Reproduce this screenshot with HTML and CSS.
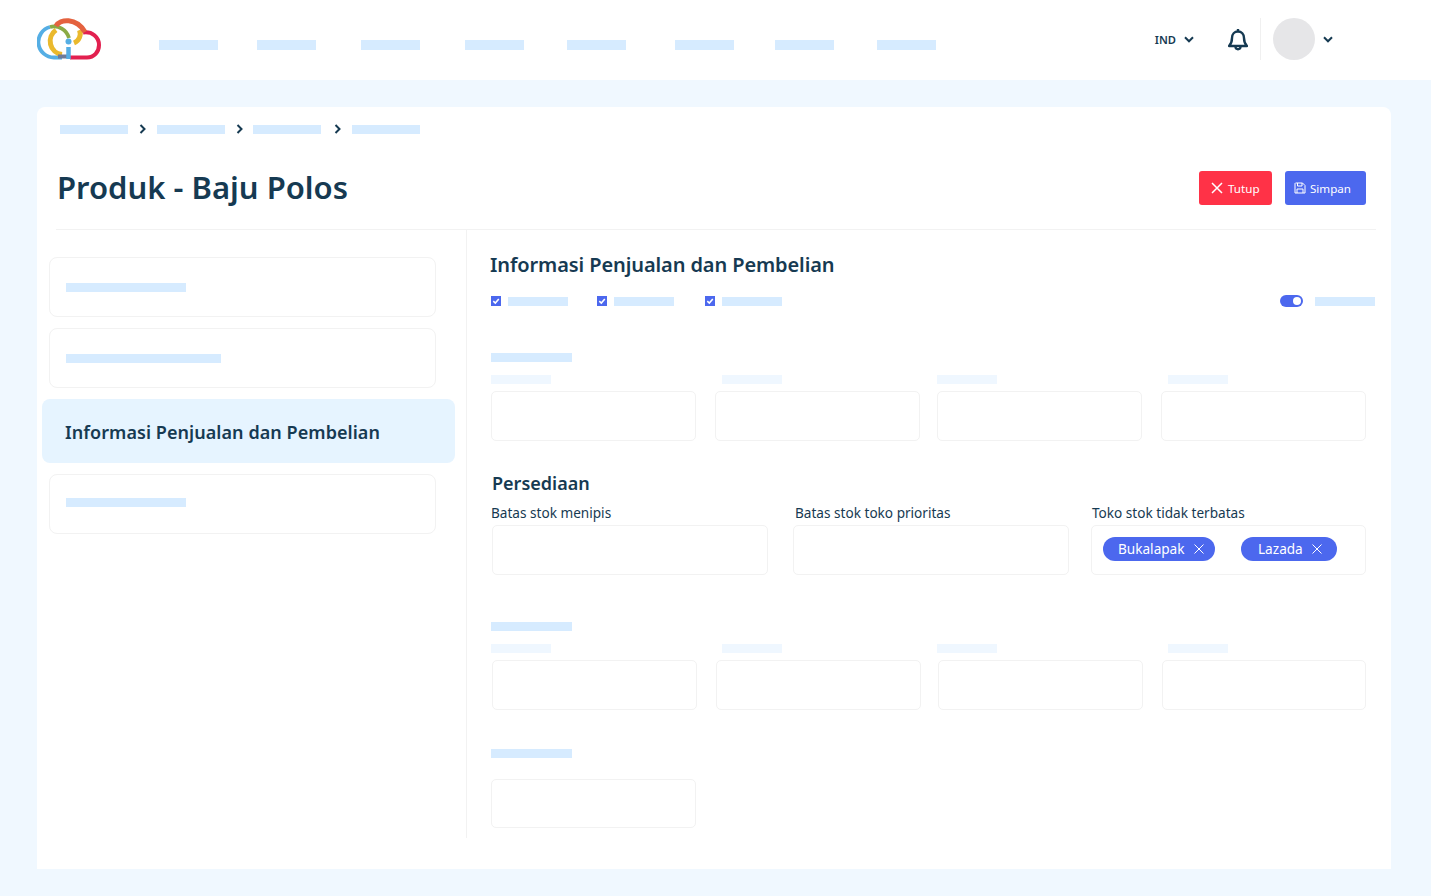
FILE: index.html
```html
<!DOCTYPE html>
<html lang="en">
<head>
    <meta charset="UTF-8">
    <title>Produk - Baju Polos</title>
    <link rel="stylesheet" href="styles.css">
</head>
<body>
    <header class="topbar">
        <svg class="logo" viewBox="37 18 65 42" width="65" height="42" fill="none">
            <path d="M83 32.500 C92 31 99 37 99 45 C99 52 94 57.500 87 57.500 H70" stroke="#e2204f" stroke-width="4"/>
            <path d="M62 57.500 H54 A15.500 15.500 0 0 1 50 27" stroke="#55aee4" stroke-width="3.800"/>
            <path d="M62 54.500 A13.500 13.500 0 0 1 56 30" stroke="#eab92d" stroke-width="5"/>
            <path d="M74 43 A10 10 0 0 0 79.500 30" stroke="#eab92d" stroke-width="5"/>
            <path d="M50 27 A15.500 15.500 0 0 1 69 38" stroke="#8aaa45" stroke-width="3.800"/>
            <path d="M56 26 C60 19 76 17 85 32" stroke="#e4623f" stroke-width="5"/>
            <path d="M58 56.500 H70" stroke="#6f7a98" stroke-width="4"/>
            <circle cx="68.500" cy="41.500" r="3" fill="#55aee4"/>
            <path d="M68.500 47 V59" stroke="#55aee4" stroke-width="4.500"/>
        </svg>
        <nav class="nav">
            <span class="bar"></span><span class="bar"></span><span class="bar"></span><span class="bar"></span>
            <span class="bar"></span><span class="bar"></span><span class="bar"></span><span class="bar"></span>
        </nav>
        <div class="top-right">
            <span class="lang">IND</span>
            <svg class="chev" viewBox="0 0 10 7" width="10" height="7"><path d="M1 1.300 L5 5.300 L9 1.300"/></svg>
            <svg class="bell" viewBox="0 0 20 23" width="20" height="23" fill="none" stroke="#163a52" stroke-width="2.400">
                <path d="M1 18 H19 C16.500 15.500 16 14 16 10 C16 6 13.500 3.500 10 3.500 C6.500 3.500 4 6 4 10 C4 14 3.500 15.500 1 18 Z" stroke-linejoin="round"/>
                <path d="M10 1 V3.500"/>
                <path d="M7.500 19 C7.800 22 12.200 22 12.500 19"/>
            </svg>
            <span class="vline"></span>
            <span class="avatar"></span>
            <svg class="chev" viewBox="0 0 10 7" width="10" height="7"><path d="M1 1.300 L5 5.300 L9 1.300"/></svg>
        </div>
    </header>

    <main class="card">
        <div class="crumbs">
            <span class="bar"></span>
            <svg class="crumb-arrow" viewBox="0 0 7 10" width="7" height="10"><path d="M1.500 1 L5.500 5 L1.500 9"/></svg>
            <span class="bar"></span>
            <svg class="crumb-arrow tight" viewBox="0 0 7 10" width="7" height="10"><path d="M1.500 1 L5.500 5 L1.500 9"/></svg>
            <span class="bar"></span>
            <svg class="crumb-arrow wide" viewBox="0 0 7 10" width="7" height="10"><path d="M1.500 1 L5.500 5 L1.500 9"/></svg>
            <span class="bar"></span>
        </div>

        <div class="title-row">
            <h1>Produk - Baju Polos</h1>
            <button class="btn btn-red">
                <svg viewBox="0 0 12 12" width="12" height="12"><path d="M1 1 L11 11 M11 1 L1 11"/></svg>
                Tutup
            </button>
            <button class="btn btn-blue">
                <svg viewBox="0 0 12 12" width="12" height="12"><path d="M1.500 1 H8.500 L11 3.500 V11 H1 V1.500 Z M3.500 1 V4 H8 V1 M3 11 V7 H9 V11"/></svg>
                Simpan
            </button>
        </div>

        <div class="body">
            <aside class="sidebar">
                <div class="side-item"><span class="bar w120"></span></div>
                <div class="side-item"><span class="bar w155"></span></div>
                <div class="side-item active"><span>Informasi Penjualan dan Pembelian</span></div>
                <div class="side-item"><span class="bar w120 raised"></span></div>
            </aside>

            <section class="content">
                <h2>Informasi Penjualan dan Pembelian</h2>

                <div class="checks">
                    <span class="check"><svg viewBox="0 0 10 10" width="10" height="10"><path d="M2.300 5.200 L4.300 7 L7.800 3"/></svg></span>
                    <span class="bar"></span>
                    <span class="check second"><svg viewBox="0 0 10 10" width="10" height="10"><path d="M2.300 5.200 L4.300 7 L7.800 3"/></svg></span>
                    <span class="bar"></span>
                    <span class="check third"><svg viewBox="0 0 10 10" width="10" height="10"><path d="M2.300 5.200 L4.300 7 L7.800 3"/></svg></span>
                    <span class="bar"></span>
                    <span class="toggle"><span class="knob"></span></span>
                    <span class="bar"></span>
                </div>

                <span class="bar heading first"></span>
                <div class="fields">
                    <div><span class="bar pale"></span><div class="input"></div></div>
                    <div><span class="bar pale indent"></span><div class="input"></div></div>
                    <div><span class="bar pale"></span><div class="input"></div></div>
                    <div><span class="bar pale indent"></span><div class="input"></div></div>
                </div>

                <h3>Persediaan</h3>
                <div class="stock">
                    <div>
                        <label>Batas stok menipis</label>
                        <div class="input"></div>
                    </div>
                    <div>
                        <label class="nudge">Batas stok toko prioritas</label>
                        <div class="input"></div>
                    </div>
                    <div>
                        <label class="nudge-small">Toko stok tidak terbatas</label>
                        <div class="input tags">
                            <span class="tag tag-wide"><span class="tag-text">Bukalapak</span> <svg viewBox="0 0 10 10" width="10" height="10"><path d="M0.500 0.500 L9.500 9.500 M9.500 0.500 L0.500 9.500"/></svg></span>
                            <span class="tag tag-narrow"><span class="tag-text">Lazada</span> <svg viewBox="0 0 10 10" width="10" height="10"><path d="M0.500 0.500 L9.500 9.500 M9.500 0.500 L0.500 9.500"/></svg></span>
                        </div>
                    </div>
                </div>

                <span class="bar heading third-block"></span>
                <div class="fields shifted">
                    <div><span class="bar pale"></span><div class="input"></div></div>
                    <div><span class="bar pale indent"></span><div class="input"></div></div>
                    <div><span class="bar pale"></span><div class="input"></div></div>
                    <div><span class="bar pale indent"></span><div class="input"></div></div>
                </div>

                <span class="bar heading last-block"></span>
                <div class="input lone"></div>
            </section>
        </div>
    </main>
</body>
</html>
```

FILE: styles.css
```css
* {
    margin: 0;
    padding: 0;
    box-sizing: border-box;
}

body {
    font-family: "Noto Sans", Lato, sans-serif;
    background: #f0f8ff;
    color: #163a52;
    height: 896px;
    overflow: hidden;
}

.bar {
    display: block;
    width: 60px;
    height: 9px;
    background: #d6ebff;
}

/* top bar */
.topbar {
    display: flex;
    align-items: center;
    height: 80px;
    padding: 0 98px 2px 37px;
    background: #fff;
}

.logo {
    flex: none;
}

.nav {
    display: grid;
    grid-template-columns: 98px 104px 104px 102px 108px 100px 102px 59px;
    margin-left: 57px;
    margin-top: 12px;
}

.nav .bar {
    width: 59px;
    height: 10px;
}

.top-right {
    display: flex;
    align-items: center;
    margin-left: auto;
}

.lang {
    font-size: 11.200px;
    font-weight: 600;
    margin-right: 8px;
}

.chev {
    fill: none;
    stroke: #163a52;
    stroke-width: 2;
}

.bell {
    margin-left: 34px;
}

.vline {
    width: 1px;
    height: 42px;
    margin: 0 12px;
    background: #f0f0f0;
}

.avatar {
    width: 42px;
    height: 42px;
    margin-right: 8px;
    border-radius: 50%;
    background: #e6e6e8;
}

/* main card */
.card {
    width: 1354px;
    height: 762px;
    margin: 27px 0 0 37px;
    background: #fff;
    border-radius: 8px 8px 0 0;
}

.crumbs {
    display: flex;
    align-items: center;
    padding: 17px 0 0 23px;
}

.crumbs .bar {
    width: 68px;
}

.crumb-arrow {
    margin: 0 11px;
    fill: none;
    stroke: #163a52;
    stroke-width: 2;
}

.crumb-arrow.tight {
    margin-right: 10px;
}

.crumb-arrow.wide {
    margin-left: 13px;
}

.title-row {
    display: flex;
    align-items: center;
    margin: 37px 15px 0 19px;
    padding: 0 10px 24px 1px;
    border-bottom: 1px solid #f2f2f2;
}

h1 {
    margin-right: auto;
    padding-bottom: 2px;
    font-size: 31px;
    line-height: 32px;
    font-weight: 600;
}

.btn {
    display: flex;
    align-items: center;
    gap: 5px;
    height: 34px;
    border: 0;
    border-radius: 3px;
    color: #fff;
    font-family: inherit;
    font-size: 11.600px;
}

.btn svg {
    fill: none;
    stroke: #fff;
}

.btn-red {
    width: 73px;
    padding-left: 12px;
    background: #ff3247;
}

.btn-red svg {
    stroke-width: 1.500;
}

.btn-blue {
    width: 81px;
    margin-left: 13px;
    padding-left: 9px;
    gap: 4px;
    background: #4c68ee;
}

.body {
    display: flex;
    height: 608px;
}

.sidebar {
    width: 430px;
    padding-top: 27px;
    border-right: 1px solid #f2f2f2;
}

.side-item {
    display: flex;
    align-items: center;
    width: 387px;
    height: 60px;
    margin: 0 0 11px 12px;
    padding-left: 16px;
    border: 1px solid #f2f2f2;
    border-radius: 8px;
}

.side-item.active {
    width: 413px;
    height: 64px;
    margin-left: 5px;
    padding: 2px 0 0 23px;
    border: 0;
    background: #e6f4ff;
    font-size: 18px;
    font-weight: 600;
    letter-spacing: 0.060px;
}

.w120 {
    width: 120px;
}

.w155 {
    width: 155px;
}

.raised {
    margin-bottom: 3px;
}

/* right side */
.content {
    flex: 1;
    padding: 20px 0 0 24px;
}

h2 {
    margin-left: -1px;
    font-size: 20px;
    line-height: 30px;
    font-weight: 600;
    letter-spacing: -0.100px;
}

.checks {
    display: flex;
    align-items: center;
    height: 12px;
    margin-top: 15px;
}

.check {
    display: block;
    width: 10px;
    height: 10px;
    margin-right: 7px;
    background: #4c68ee;
}

.check svg {
    display: block;
    fill: none;
    stroke: #fff;
    stroke-width: 1.600;
}

.check.second {
    margin-left: 29px;
}

.check.third {
    margin-left: 31px;
}

.toggle {
    display: block;
    width: 23px;
    height: 12px;
    margin: 0 12px 0 auto;
    padding: 2px;
    border-radius: 6px;
    background: #4c68ee;
}

.knob {
    display: block;
    width: 8px;
    height: 8px;
    margin-left: 11px;
    border-radius: 50%;
    background: #fff;
}

.checks .bar:last-child {
    margin-right: 16px;
}

.heading {
    width: 81px;
}

.heading.first {
    margin-top: 46px;
}

.heading.third-block {
    margin-top: 47px;
}

.heading.last-block {
    margin-top: 39px;
}

.fields {
    display: grid;
    grid-template-columns: 224px 222px 224px 205px;
    margin-top: 13px;
}

.pale {
    margin-bottom: 7px;
    background: #eff7ff;
}

.indent {
    margin-left: 7px;
}

.input {
    height: 50px;
    border: 1px solid #f2f2f2;
    border-radius: 5px;
}

.fields .input {
    width: 205px;
}

.fields.shifted .input {
    margin-left: 1px;
}

.fields.shifted > div:last-child .input {
    width: 204px;
}

h3 {
    margin-top: 29px;
    margin-left: 1px;
    font-size: 18px;
    line-height: 26px;
    font-weight: 600;
}

.stock {
    display: grid;
    grid-template-columns: 301px 298px 275px;
    margin-top: 8px;
    padding-left: 1px;
}

.stock label {
    display: block;
    margin-bottom: 3px;
    margin-left: -1px;
    font-size: 13.600px;
    line-height: 18px;
}

.stock label.nudge {
    margin-left: 2px;
}

.stock label.nudge-small {
    margin-left: 1px;
}

.stock .input {
    width: 276px;
}

.stock .input.tags {
    width: 275px;
}

.tags {
    display: flex;
    align-items: center;
    gap: 26px;
    padding: 0 0 2px 11px;
}

.tag {
    display: flex;
    align-items: center;
    height: 24px;
    border-radius: 12px;
    background: #4c68ee;
    color: #fff;
    font-size: 13.600px;
}

.tag-text {
    padding-bottom: 2px;
}

.tag-wide {
    width: 112px;
    padding-left: 15px;
}

.tag-narrow {
    width: 96px;
    padding-left: 17px;
}

.tag svg {
    margin-left: 9px;
    fill: none;
    stroke: #fff;
}

.input.lone {
    width: 205px;
    height: 49px;
    margin-top: 21px;
}
```
